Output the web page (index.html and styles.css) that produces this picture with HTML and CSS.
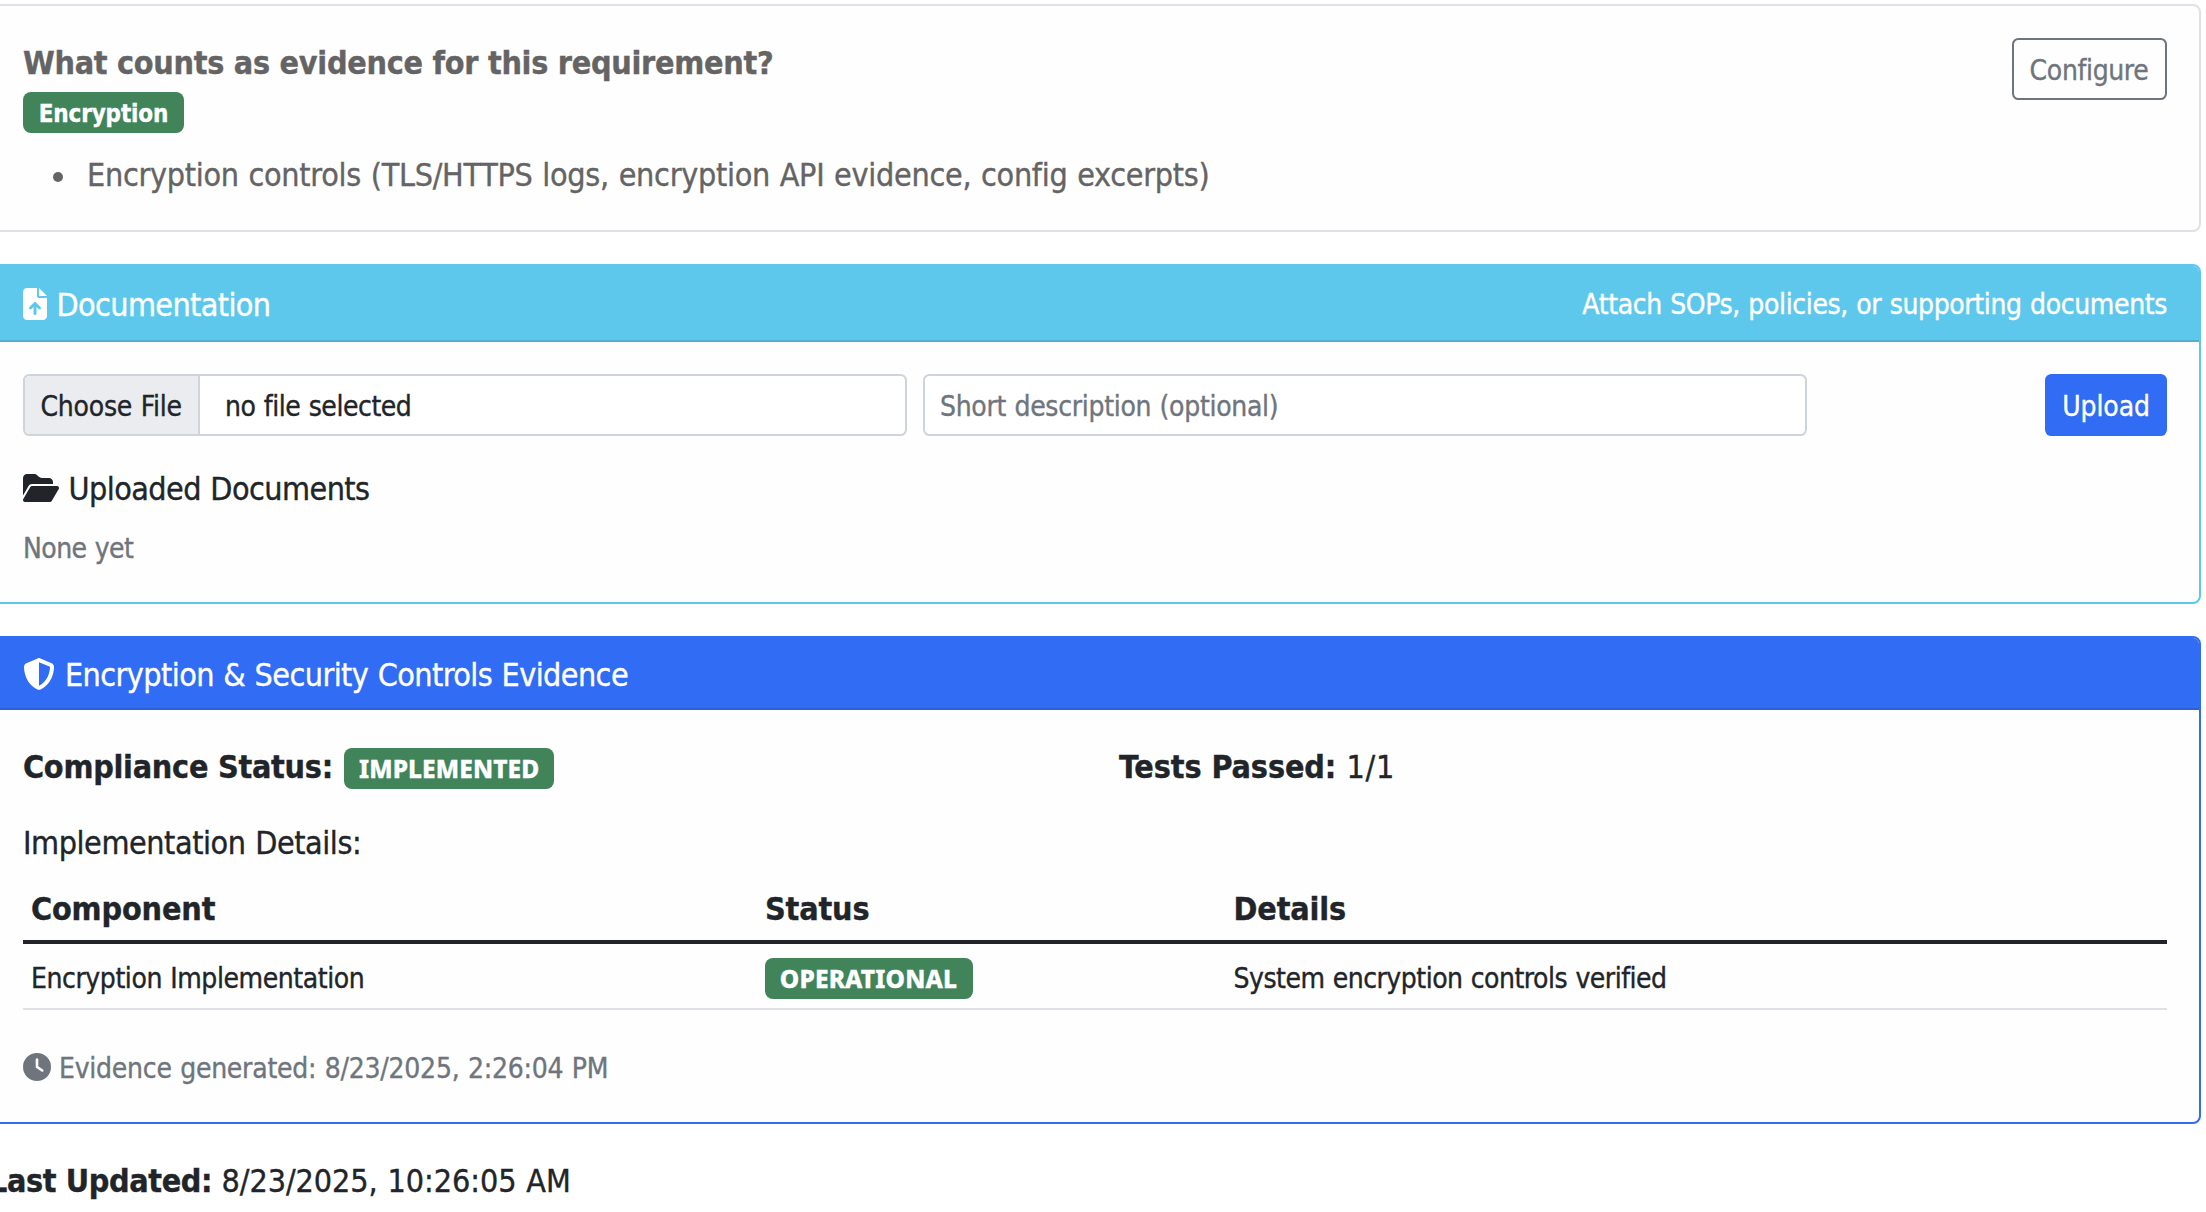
FILE: index.html
```html
<!DOCTYPE html>
<html lang="en">
<head>
<meta charset="utf-8">
<title>Requirement Evidence</title>
<link rel="stylesheet" href="styles.css">
</head>
<body>
<main class="page">
  <section class="card card-info">
    <div>
      <h2 class="question">What counts as evidence for this requirement?</h2>
      <span class="badge badge-tag">Encryption</span>
      <ul class="evidence-list"><li><span>Encryption controls (TLS/HTTPS logs, encryption API evidence, config excerpts)</span></li></ul>
    </div>
    <button class="btn btn-outline">Configure</button>
  </section>

  <section class="card card-docs">
    <header class="card-header">
      <svg class="icon-file" viewBox="0 0 384 512" fill="currentColor"><path d="M64 0C28.7 0 0 28.7 0 64V448c0 35.3 28.7 64 64 64H320c35.3 0 64-28.7 64-64V160H256c-17.7 0-32-14.3-32-32V0H64zM256 0V128H384L256 0zM216 408c0 13.3-10.7 24-24 24s-24-10.7-24-24V305.9l-31 31c-9.4 9.4-24.6 9.4-33.9 0s-9.4-24.6 0-33.9l72-72c9.4-9.4 24.6-9.4 33.9 0l72 72c9.4 9.4 9.4 24.6 0 33.9s-24.6 9.4-33.9 0l-31-31V408z"/></svg>
      <span class="header-title docs-title">Documentation</span>
      <span class="header-note">Attach SOPs, policies, or supporting documents</span>
    </header>
    <div class="card-body">
      <div class="upload-row">
        <div class="field file-field"><span class="file-button">Choose File</span><span class="file-name">no file selected</span></div>
        <div class="field text-field">Short description (optional)</div>
        <button class="btn btn-primary">Upload</button>
      </div>
      <h3 class="docs-heading">
        <svg class="icon-folder" viewBox="0 0 576 512" fill="currentColor"><path d="M88.7 223.8L0 375.8V96C0 60.7 28.7 32 64 32H181.5c17 0 33.3 6.7 45.3 18.7l26.5 26.5c12 12 28.3 18.7 45.3 18.7H416c35.3 0 64 28.7 64 64v32H144c-22.8 0-43.8 12.1-55.3 31.8zm27.6 16.1C122.1 230 132.6 224 144 224H544c11.5 0 22 6.1 27.7 16.1s5.7 22.2-.1 32.1l-112 192C453.9 474 443.4 480 432 480H32c-11.5 0-22-6.1-27.7-16.1s-5.7-22.2 .1-32.1l112-192z"/></svg>
        <span>Uploaded Documents</span>
      </h3>
      <p class="empty">None yet</p>
    </div>
  </section>

  <section class="card card-controls">
    <header class="card-header">
      <svg class="icon-shield" viewBox="0 0 512 512" fill="currentColor"><path d="M256 0c4.6 0 9.2 1 13.4 2.9L457.7 82.8c22 9.3 38.4 31 38.3 57.2c-.5 99.2-41.3 280.7-213.6 363.2c-16.7 8-36.1 8-52.8 0C57.3 420.7 16.5 239.2 16 140c-.1-26.2 16.3-47.9 38.3-57.2L242.7 2.9C246.8 1 251.4 0 256 0zm0 66.8V444.8C394 378 431.1 230.1 432 141.4L256 66.8l0 0z"/></svg>
      <span class="header-title controls-title">Encryption &amp; Security Controls Evidence</span>
    </header>
    <div class="card-body">
      <div class="summary">
        <div class="summary-item"><strong class="status-label">Compliance Status:</strong><span class="badge badge-implemented">IMPLEMENTED</span></div>
        <div class="summary-item"><strong class="tests-label">Tests Passed:</strong><span class="tests-value">1/1</span></div>
      </div>
      <h3 class="details-heading">Implementation Details:</h3>
      <table class="details">
        <colgroup><col class="col-component"><col class="col-status"><col></colgroup>
        <thead><tr><th>Component</th><th>Status</th><th>Details</th></tr></thead>
        <tbody><tr>
          <td class="cell-component">Encryption Implementation</td>
          <td class="cell-status"><span class="badge badge-operational">OPERATIONAL</span></td>
          <td class="cell-details">System encryption controls verified</td>
        </tr></tbody>
      </table>
      <p class="generated">
        <svg class="icon-clock" viewBox="0 0 512 512" fill="currentColor"><path d="M256 0a256 256 0 1 1 0 512A256 256 0 1 1 256 0zM232 120V256c0 8 4 15.5 10.7 20l96 64c11 7.4 25.9 4.4 33.3-6.7s4.4-25.9-6.7-33.3L280 243.2V120c0-13.3-10.7-24-24-24s-24 10.7-24 24z"/></svg>
        <span>Evidence generated: 8/23/2025, 2:26:04 PM</span>
      </p>
    </div>
  </section>

  <p class="updated"><strong>Last Updated:</strong><span>8/23/2025, 10:26:05 AM</span></p>
</main>
</body>
</html>
```
FILE: styles.css
```css
* { box-sizing: border-box; }

html { overflow: hidden; }

body {
  margin: 0;
  background: #fff;
  color: #212529;
  font: 32px/48px "DejaVu Sans Condensed", "DejaVu Sans", sans-serif;
  -webkit-text-stroke: 0.35px currentColor;
  white-space: nowrap;
}

h2, h3, p, ul { margin: 0; padding: 0; font-size: 32px; font-weight: 400; }
svg { display: block; flex: none; }

/* The panel runs past the left edge of the viewport */
.page {
  width: 2212px;
  margin-left: -11px;
  padding-top: 4px;
}

.card {
  border: 2px solid #dee2e6;
  border-radius: 8px;
  background: #fefefe;
  margin-bottom: 32px;
}

.card-info {
  display: flex;
  justify-content: space-between;
  align-items: flex-start;
  height: 228px;
  padding: 32px;
  color: #646464;
}

.question {
  line-height: 50px;
  font-weight: 700;
  letter-spacing: -0.28px;
}

.badge {
  display: block;
  height: 41px;
  border-radius: 8px;
  background: #41845a;
  color: #fff;
  font: 800 24.5px/41px "Noto Sans", sans-serif;
}

.badge-tag {
  width: 161px;
  margin-top: 4px;
  padding: 3px 0 0 15.7px;
  font: 700 24px/38px "DejaVu Sans Condensed", "DejaVu Sans", sans-serif;
  letter-spacing: -0.15px;
}

.evidence-list { margin-top: 18px; list-style: none; }

.evidence-list li {
  display: flex;
  gap: 24px;
  padding-left: 30px;
  letter-spacing: -0.28px;
  word-spacing: 0.87px;
}

.evidence-list li::before {
  content: "";
  width: 10px;
  height: 10px;
  margin-top: 21px;
  border-radius: 50%;
  background: currentColor;
}

.btn {
  height: 62px;
  border: 0;
  border-radius: 6.4px;
  font-family: inherit;
  font-size: 28px;
  text-align: left;
  white-space: nowrap;
}

.btn-outline {
  width: 155px;
  padding: 3px 0 0 15.6px;
  border: 2px solid #6f757c;
  background: transparent;
  color: #6f757c;
  line-height: 55px;
  letter-spacing: -0.36px;
}

.btn-primary {
  width: 122px;
  margin-left: auto;
  padding: 4px 0 1px 17.2px;
  background: #316cf4;
  color: #fff;
  line-height: 57px;
  letter-spacing: -0.1px;
}

.card-docs { height: 340px; border-color: #5ec8ec; }
.card-controls { height: 488px; border-color: #316cf4; }

.card-header {
  display: flex;
  align-items: flex-start;
  padding: 0 32px;
  border-radius: 6px 6px 0 0;
  color: #fff;
}

.card-docs .card-header {
  height: 76px;
  border-bottom: 2px solid #53afd0;
  background: #5ec8ec;
}

.card-controls .card-header {
  height: 72px;
  border-bottom: 2px solid #2d60d6;
  background: #316cf4;
}

.header-title { line-height: 70px; }
.docs-title { margin: 4px 0 0 9.5px; letter-spacing: -0.62px; }
.controls-title { margin: 2px 0 0 10px; letter-spacing: -0.57px; word-spacing: 0.87px; }

.header-note {
  margin: 4px 0 0 auto;
  font-size: 28px;
  line-height: 69px;
  letter-spacing: -0.37px;
  word-spacing: 0.76px;
}

.icon-file { width: 24px; height: 32px; margin-top: 22px; }
.icon-shield { width: 32px; height: 32px; margin-top: 20px; }
.icon-folder { width: 36px; height: 32px; margin: 7px 9.5px 0 0; }
.icon-clock { width: 28px; height: 28px; margin: 6px 8px 0 0; }

.card-body { padding: 32px; }

.upload-row { display: flex; gap: 16px; }

.field {
  display: flex;
  width: 884px;
  height: 62px;
  border: 2px solid #ced4da;
  border-radius: 6.4px;
  background: #fff;
  font-size: 28px;
  line-height: 55px;
  word-spacing: 0.76px;
  overflow: hidden;
}

.file-button {
  width: 175px;
  padding: 3px 0 0 15.5px;
  border-right: 2px solid #ced4da;
  background: #ebecf0;
  letter-spacing: -0.23px;
}

.file-name { padding: 3px 0 0 25px; letter-spacing: -0.45px; }

.text-field {
  padding: 3px 0 0 15px;
  color: #6f757c;
  letter-spacing: -0.31px;
}

.docs-heading {
  display: flex;
  margin-top: 29px;
  letter-spacing: -0.56px;
  word-spacing: 0.87px;
}

.empty {
  margin-top: 14px;
  color: #6f757c;
  font-size: 28px;
  line-height: 43px;
  letter-spacing: -0.56px;
  word-spacing: 0.76px;
}

.summary {
  display: grid;
  grid-template-columns: 1096px 1fr;
  margin-top: 1px;
}

.summary-item { display: flex; }
.status-label { width: 321px; letter-spacing: -0.26px; }
.badge-implemented { width: 210px; margin-top: 5px; padding-left: 15px; letter-spacing: 0.08px; }
.tests-label { width: 228.5px; letter-spacing: -0.1px; }
.tests-value { letter-spacing: 0.7px; margin-left: -1px; }

.details-heading {
  margin-top: 28px;
  letter-spacing: -0.43px;
  word-spacing: 0.87px;
}

.details {
  width: 100%;
  margin-top: 18px;
  border-spacing: 0;
  table-layout: fixed;
}

.col-component { width: 734px; }
.col-status { width: 468.5px; }

.details th {
  padding: 0 8px 7px;
  border-bottom: 4px solid #212529;
  font-weight: 700;
  text-align: left;
  letter-spacing: -0.15px;
}

.details td {
  padding: 13px 8px 8px;
  border-bottom: 2px solid #dee2e6;
  font-size: 28px;
  line-height: 43px;
  vertical-align: top;
  word-spacing: 0.76px;
}

.details .cell-component { letter-spacing: -0.43px; }
.details .cell-status { padding: 14px 8px 9px; }
.badge-operational { width: 208px; padding-left: 14.8px; letter-spacing: 0.15px; }
.details .cell-details { letter-spacing: -0.5px; }

.generated {
  display: flex;
  margin-top: 37px;
  color: #6f757c;
  font-size: 28px;
  line-height: 43px;
  letter-spacing: -0.25px;
  word-spacing: 0.76px;
}

.updated { display: flex; margin-top: 33px; }
.updated strong { width: 232.5px; letter-spacing: -0.38px; }
.updated span { letter-spacing: -0.06px; word-spacing: 0.87px; }
```
